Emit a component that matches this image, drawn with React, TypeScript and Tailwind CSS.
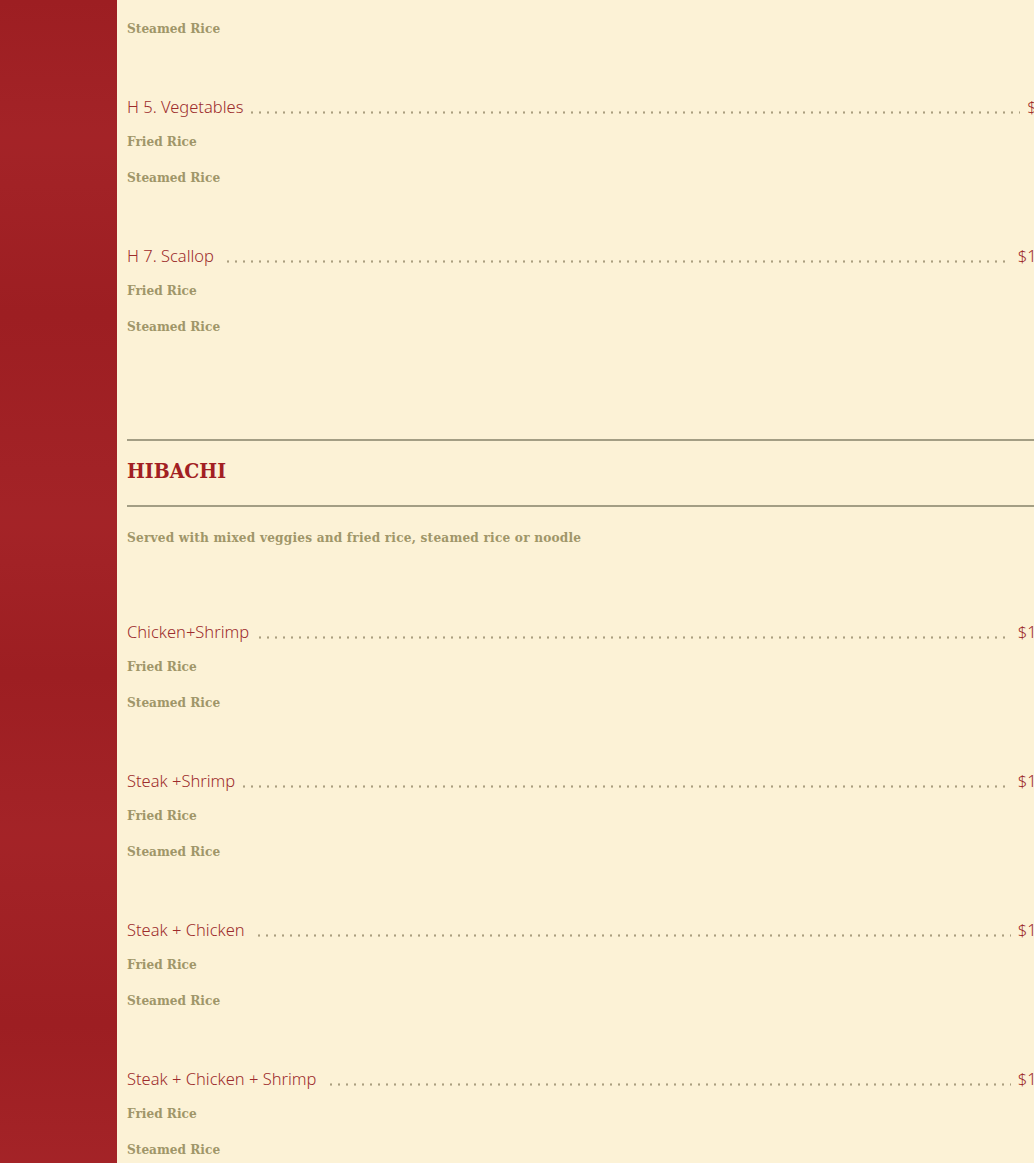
type Item = { name: string; price: string; gap: number };

const topItems: Item[] = [
  { name: "H 5. Vegetables", price: "$8.95", gap: 5 },
  { name: "H 7. Scallop", price: "$13.95", gap: 10 },
];

const hibachi: Item[] = [
  { name: "Chicken+Shrimp", price: "$14.95", gap: 7 },
  { name: "Steak +Shrimp", price: "$15.95", gap: 5 },
  { name: "Steak + Chicken", price: "$14.95", gap: 10 },
  { name: "Steak + Chicken + Shrimp", price: "$17.95", gap: 11 },
];

const nameFont = "font-['Noto_Sans','Lato',sans-serif] font-light";
const slabFont = "font-['DejaVu_Serif','Liberation_Serif',serif] [font-stretch:condensed]";

function Option({ label, className = "" }: { label: string; className?: string }) {
  return (
    <div
      className={`h-[24px] leading-[24px] text-[13.5px] font-bold text-[#a09669] ${slabFont} ${className}`}
    >
      {label}
    </div>
  );
}

function MenuItem({ item }: { item: Item }) {
  return (
    <div className="mb-[55px]">
      <div className={`flex items-end h-[24px] text-[16.5px] leading-[24px] text-[#9c2c2c] ${nameFont}`}>
        <span className="whitespace-nowrap">{item.name}</span>
        <span
          className="flex-1 h-[3px] mb-[5px] mr-[7px] bg-[radial-gradient(circle,#aa9f7f_0.9px,transparent_1.4px)] bg-[length:8px_3px] bg-repeat-x"
          style={{ marginLeft: item.gap }}
        />
        <span className="whitespace-nowrap">{item.price}</span>
      </div>
      <Option label="Fried Rice" className="mt-[10px]" />
      <Option label="Steamed Rice" className="mt-[12px]" />
    </div>
  );
}

export default function App() {
  return (
    <div className="flex h-[1163px] w-full overflow-hidden bg-[#fcf2d6]">
      <aside className="w-[117px] shrink-0 bg-[#a21f23] bg-[linear-gradient(180deg,rgba(0,0,0,0.03)_0%,rgba(255,255,255,0.02)_12%,rgba(0,0,0,0.03)_27%,rgba(255,255,255,0.02)_45%,rgba(0,0,0,0.03)_58%,rgba(255,255,255,0.02)_72%,rgba(0,0,0,0.03)_88%,rgba(255,255,255,0.02)_100%)]" />
      <main className="ml-[10px] w-[942px] shrink-0 pt-[16px]">
        <Option label="Steamed Rice" className="mb-[55px]" />
        {topItems.map((it) => (
          <MenuItem key={it.name} item={it} />
        ))}

        <section className="mt-[101px]">
          <div className="h-[2px] bg-[#a39e84]" />
          <h2
            className={`mt-[15px] h-[30px] leading-[30px] text-[21px] font-bold text-[#a21f23] ${slabFont}`}
          >
            HIBACHI
          </h2>
          <div className="mt-[19px] h-[2px] bg-[#a39e84]" />
          <p
            className={`mt-[20px] h-[20px] leading-[20px] text-[13.5px] font-bold tracking-[0.2px] text-[#a09669] ${slabFont}`}
          >
            Served with mixed veggies and fried rice, steamed rice or noodle
          </p>
          <div className="mt-[73px]">
            {hibachi.map((it) => (
              <MenuItem key={it.name} item={it} />
            ))}
          </div>
        </section>
      </main>
    </div>
  );
}
